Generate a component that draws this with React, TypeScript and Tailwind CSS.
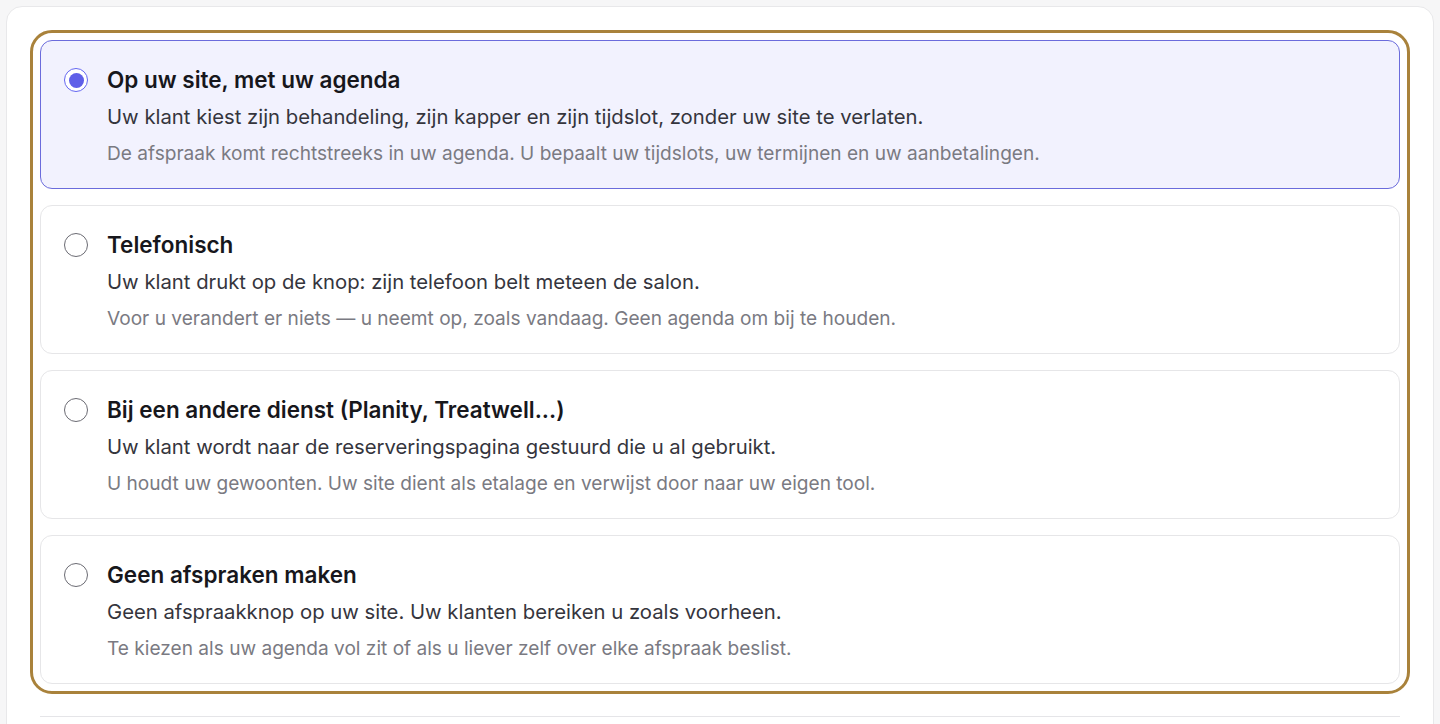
const OPTIONS = [
  {
    id: "agenda",
    title: "Op uw site, met uw agenda",
    desc: "Uw klant kiest zijn behandeling, zijn kapper en zijn tijdslot, zonder uw site te verlaten.",
    note: "De afspraak komt rechtstreeks in uw agenda. U bepaalt uw tijdslots, uw termijnen en uw aanbetalingen.",
  },
  {
    id: "phone",
    title: "Telefonisch",
    desc: "Uw klant drukt op de knop: zijn telefoon belt meteen de salon.",
    note: "Voor u verandert er niets — u neemt op, zoals vandaag. Geen agenda om bij te houden.",
  },
  {
    id: "external",
    title: "Bij een andere dienst (Planity, Treatwell...)",
    desc: "Uw klant wordt naar de reserveringspagina gestuurd die u al gebruikt.",
    note: "U houdt uw gewoonten. Uw site dient als etalage en verwijst door naar uw eigen tool.",
  },
  {
    id: "none",
    title: "Geen afspraken maken",
    desc: "Geen afspraakknop op uw site. Uw klanten bereiken u zoals voorheen.",
    note: "Te kiezen als uw agenda vol zit of als u liever zelf over elke afspraak beslist.",
  },
];

function Radio({ checked }: { checked: boolean }) {
  return checked ? (
    <div className="w-6 h-6 rounded-full border-[1.5px] border-[#6366f1] flex items-center justify-center shrink-0 bg-white">
      <div className="w-[15px] h-[15px] rounded-full bg-[#5f5fe8]" />
    </div>
  ) : (
    <div className="w-6 h-6 rounded-full border-[1.5px] border-[#6b6b73] shrink-0 bg-white" />
  );
}

export default function App() {
  const selected = "agenda";
  return (
    <div
      className="h-screen bg-[#f6f6f7] p-[6px] overflow-hidden"
      style={{ fontFamily: "Inter, 'Noto Sans', sans-serif" }}
    >
      <div className="bg-white border border-[#e8e8ea] rounded-2xl px-[33px] pt-[33px] pb-10">
        <div className="flex flex-col gap-4 rounded-xl outline outline-[3px] outline-offset-[7px] outline-[#a9823b]">
          {OPTIONS.map((o) => {
            const on = o.id === selected;
            return (
              <div
                key={o.id}
                className={`flex gap-[19px] rounded-xl border pl-[23px] pr-6 pt-6 pb-[22px] ${
                  on ? "bg-[#f2f2fe] border-[#6b6cdc]" : "bg-white border-[#e6e6e8]"
                }`}
              >
                <div className="pt-[3px]">
                  <Radio checked={on} />
                </div>
                <div className="flex flex-col">
                  <p className="text-[22.5px] leading-[30px] font-semibold text-[#17171c]">{o.title}</p>
                  <p className="mt-2 text-[20.3px] leading-7 text-[#35353d]">{o.desc}</p>
                  <p className="mt-[9px] text-[19.1px] leading-[26px] text-[#7a7a82]">{o.note}</p>
                </div>
              </div>
            );
          })}
        </div>
        <div className="mt-8 h-px bg-[#e5e5e8]" />
      </div>
    </div>
  );
}
